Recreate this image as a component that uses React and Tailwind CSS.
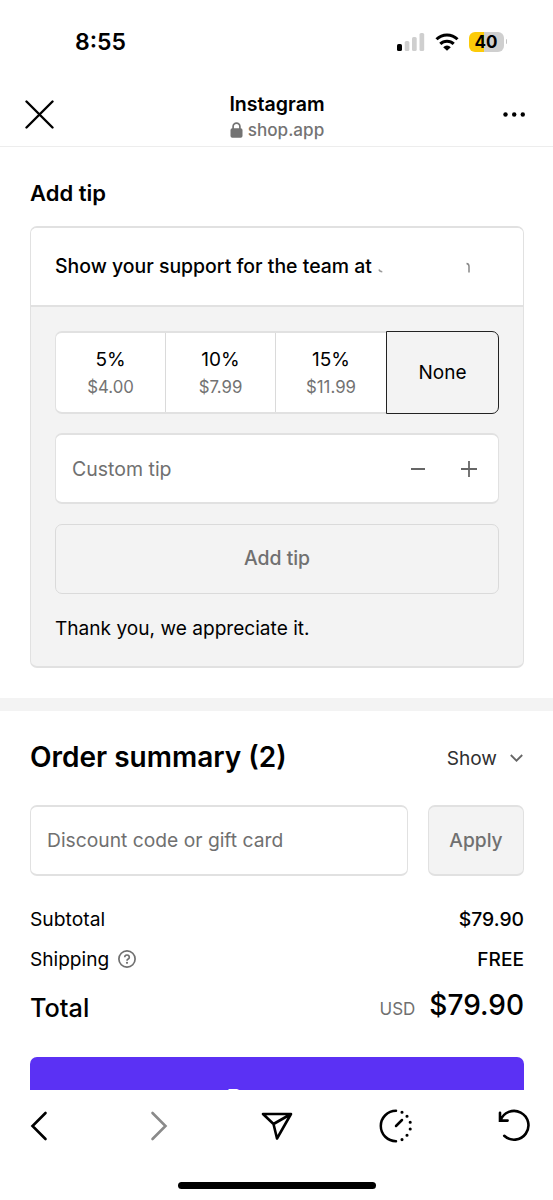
const tips = [
  { label: '5%', amount: '$4.00' },
  { label: '10%', amount: '$7.99' },
  { label: '15%', amount: '$11.99' },
];

function StatusBar() {
  return (
    <div className="flex h-[83px] items-center justify-between pl-[75px] pr-[46px]">
      <span className="text-[23px] font-semibold leading-7">8:55</span>
      <div className="flex items-center">
        <svg width="28" height="18" viewBox="0 0 28 18">
          <rect x="0" y="11" width="5" height="7" rx="1.6" fill="#000" />
          <rect x="7.7" y="8" width="4.7" height="10" rx="1.6" fill="#cfcfcf" />
          <rect x="15" y="4" width="4.7" height="14" rx="1.6" fill="#cfcfcf" />
          <rect x="22.5" y="0" width="4.7" height="18" rx="1.6" fill="#cfcfcf" />
        </svg>
        <svg className="ml-[10px]" width="24" height="18" viewBox="0 0 24 18" fill="none" stroke="#000" strokeWidth="3">
          <path d="M1.5 6.3a15 15 0 0 1 21 0" />
          <path d="M5.3 10.9a9.5 9.5 0 0 1 13.4 0" />
          <path d="M12 17.8 8.2 14.2a5.2 5.2 0 0 1 7.6 0Z" fill="#000" stroke="none" />
        </svg>
        <div className="ml-[10px] flex h-5 w-[35px] items-center justify-center rounded-[6px] bg-[linear-gradient(90deg,#fccb09_43%,#cfcfcf_43%)] text-[17px] font-bold leading-5">
          40
        </div>
        <div className="ml-[2px] h-[5px] w-[1.5px] rounded-r-full bg-[#c4c4c4]" />
      </div>
    </div>
  );
}

function Header() {
  return (
    <header className="flex h-16 items-center justify-between border-b border-[#ededed] pl-[25px] pr-[27px]">
      <svg width="29" height="29" viewBox="0 0 29 29" stroke="#000" strokeWidth="2.4" strokeLinecap="round">
        <path d="M1.5 1.5 27.5 27.5M27.5 1.5 1.5 27.5" />
      </svg>
      <div className="flex flex-col items-center pr-[3px] pt-[5px]">
        <div className="text-[19.6px] font-semibold leading-[26px]">Instagram</div>
        <div className="flex items-center gap-[5px] text-[17.1px] font-medium leading-[26px] text-[#737373]">
          <svg width="13" height="16" viewBox="0 0 13 16">
            <rect x="0.5" y="6.3" width="12" height="9.5" rx="1.8" fill="#737373" />
            <path d="M3.1 7.5V4.6a3.4 3.4 0 0 1 6.8 0v2.9" fill="none" stroke="#737373" strokeWidth="1.7" />
          </svg>
          <span>shop.app</span>
        </div>
      </div>
      <svg width="23" height="5" viewBox="0 0 23 5">
        <circle cx="2.5" cy="2.5" r="2.2" />
        <circle cx="11.2" cy="2.5" r="2.2" />
        <circle cx="19.8" cy="2.5" r="2.2" />
      </svg>
    </header>
  );
}

function TipCard() {
  return (
    <div className="mt-[18px] h-[442px] overflow-hidden rounded-[7px] border-x border-y-2 border-[#e1e1e1] bg-[#f3f3f3]">
      <div className="flex h-[79px] items-center border-b-2 border-[#e1e1e1] bg-white pl-6 text-[19.45px] font-medium">
        <span className="whitespace-nowrap">Show your support for the team at</span>
        <svg className="ml-[6px]" width="94" height="14" viewBox="0 0 94 14" fill="none" strokeWidth="1.5">
          <path d="M1 9.5q.5 2 3.3 2.3" stroke="#9b9b9b" />
          <path d="M88.5 3.5q2.5.2 2.5 3v6" stroke="#888" />
        </svg>
      </div>
      <div className="px-6 pt-6">
        <div className="flex h-[83px]">
          <div className="grid w-[331px] grid-cols-3 divide-x divide-[#dadada] rounded-l-[7px] border-y-2 border-l border-[#e1e1e1] bg-white">
            {tips.map((t) => (
              <div key={t.label} className="flex flex-col items-center justify-center pt-px">
                <span className="text-[19px] leading-[27px]">{t.label}</span>
                <span className="text-[16.8px] leading-7 text-[#737373]">{t.amount}</span>
              </div>
            ))}
          </div>
          <div className="flex flex-1 items-center justify-center rounded-r-[7px] border border-[#222] pt-px text-[19px]">
            None
          </div>
        </div>
        <div className="mt-[19px] flex h-[71px] items-center justify-between rounded-[7px] border-x border-y-2 border-[#e1e1e1] bg-white pl-4 pr-[21px]">
          <span className="pt-[2px] text-[19.5px] text-[#707070]">Custom tip</span>
          <svg width="66" height="16" viewBox="0 0 66 16" stroke="#666" strokeWidth="1.8">
            <path d="M0 8h14M50 8h16M58 0v16" />
          </svg>
        </div>
        <div className="mt-5 flex h-[70px] items-center justify-center rounded-[7px] border border-[#dadada] text-[19.4px] font-medium text-[#707070]">
          Add tip
        </div>
        <p className="mt-5 text-[19.1px] leading-7">Thank you, we appreciate it.</p>
      </div>
    </div>
  );
}

function OrderSummary() {
  return (
    <section className="h-[379px] overflow-hidden pl-[30px] pr-[29px] pt-[26px]">
      <div className="flex h-10 items-center justify-between">
        <h2 className="text-[28px] font-semibold">Order summary (2)</h2>
        <div className="flex items-center gap-[13px] pr-px pt-[2px] text-[19.1px] text-[#303030]">
          Show
          <svg width="13" height="8" viewBox="0 0 13 8" fill="none" stroke="#666" strokeWidth="1.8">
            <path d="m.8 1 5.7 5.7L12.2 1" />
          </svg>
        </div>
      </div>
      <div className="mt-7 flex h-[71px] gap-5">
        <div className="flex flex-1 items-center rounded-[7px] border-x border-y-2 border-[#e1e1e1] pl-4 text-[19.25px] text-[#707070]">
          Discount code or gift card
        </div>
        <div className="flex w-24 items-center justify-center rounded-[7px] border-x border-y-2 border-[#e1e1e1] bg-[#f3f3f3] text-[19.2px] font-medium text-[#707070]">
          Apply
        </div>
      </div>
      <div className="mt-[23px] flex h-10 items-center justify-between text-[19.3px]">
        <span>Subtotal</span>
        <span className="font-medium">$79.90</span>
      </div>
      <div className="flex h-10 items-center justify-between text-[19.1px]">
        <span className="flex items-center gap-[9px]">
          <span>Shipping</span>
          <svg width="18" height="18" viewBox="0 0 18 18" fill="none" stroke="#707070" strokeWidth="1.7">
            <circle cx="9" cy="9" r="8.1" />
            <path d="M6.7 7.2a2.3 2.2 0 1 1 3.5 1.9q-1.2.7-1.2 1.6" />
            <circle cx="9" cy="12.8" r="1.1" fill="#707070" stroke="none" />
          </svg>
        </span>
        <span className="font-medium">FREE</span>
      </div>
      <div className="mt-px flex h-[50px] items-center justify-between">
        <span className="pt-[5px] text-[25.3px] font-medium">Total</span>
        <span className="flex items-baseline gap-[14px]">
          <span className="text-[17px] text-[#707070]">USD</span>
          <span className="text-[28px] font-medium">$79.90</span>
        </span>
      </div>
      <button className="mt-[27px] flex h-[85px] w-full items-center justify-center rounded-[7px] bg-[#5b31f4] text-[25px] font-medium text-white">
        Pay now
      </button>
    </section>
  );
}

function Toolbar() {
  return (
    <footer className="flex h-[110px] flex-col items-center justify-between bg-white pb-[11px] pt-[19px]">
      <div className="flex w-full items-center pl-[30px]">
        <svg width="18" height="30" viewBox="0 0 18 30" fill="none" stroke="#000" strokeWidth="2.6" strokeLinecap="round">
          <path d="M15.5 2 2.5 15l13 13" />
        </svg>
        <svg className="ml-[102px]" width="18" height="30" viewBox="0 0 18 30" fill="none" stroke="#8a8a8a" strokeWidth="2.6" strokeLinecap="round">
          <path d="M2.5 2 15.5 15l-13 13" />
        </svg>
        <svg className="ml-[93px]" width="32" height="30" viewBox="0 0 32 30" fill="none" stroke="#000" strokeWidth="2.6" strokeLinejoin="round">
          <path d="M2 3h28L16 27.5 12.5 13ZM12.5 13 30 3" />
        </svg>
        <svg className="ml-[86px]" width="34" height="34" viewBox="0 0 34 34" fill="none" stroke="#000" strokeWidth="2.5" strokeLinecap="round">
          <path d="M17 1.8a15.2 15.2 0 0 0 0 30.4M17 17l6-6" />
          <path d="M23 3.2h.01M28 7.2h.01M31.2 13.3h.01M31.2 20h.01M28 26.2h.01M23 30.6h.01" strokeWidth="3.1" />
        </svg>
        <svg className="ml-[85px]" width="33" height="34" viewBox="0 0 33 34" fill="none" stroke="#000" strokeWidth="2.6" strokeLinecap="round">
          <path d="M2 3.8v7.8h7.6M2.5 11.4A14.4 14.4 0 1 1 6.2 26.8" />
        </svg>
      </div>
      <div className="h-[7px] w-[198px] rounded-full bg-black" />
    </footer>
  );
}

export default function App() {
  return (
    <div className="h-[1200px] w-[553px] overflow-hidden bg-white font-['Inter',sans-serif] text-black">
      <StatusBar />
      <Header />
      <section className="h-[551px] pl-[30px] pr-[29px] pt-8">
        <h2 className="text-[22px] font-semibold leading-[29px]">Add tip</h2>
        <TipCard />
      </section>
      <div className="h-[13px] bg-[#f3f3f3]" />
      <OrderSummary />
      <Toolbar />
    </div>
  );
}
